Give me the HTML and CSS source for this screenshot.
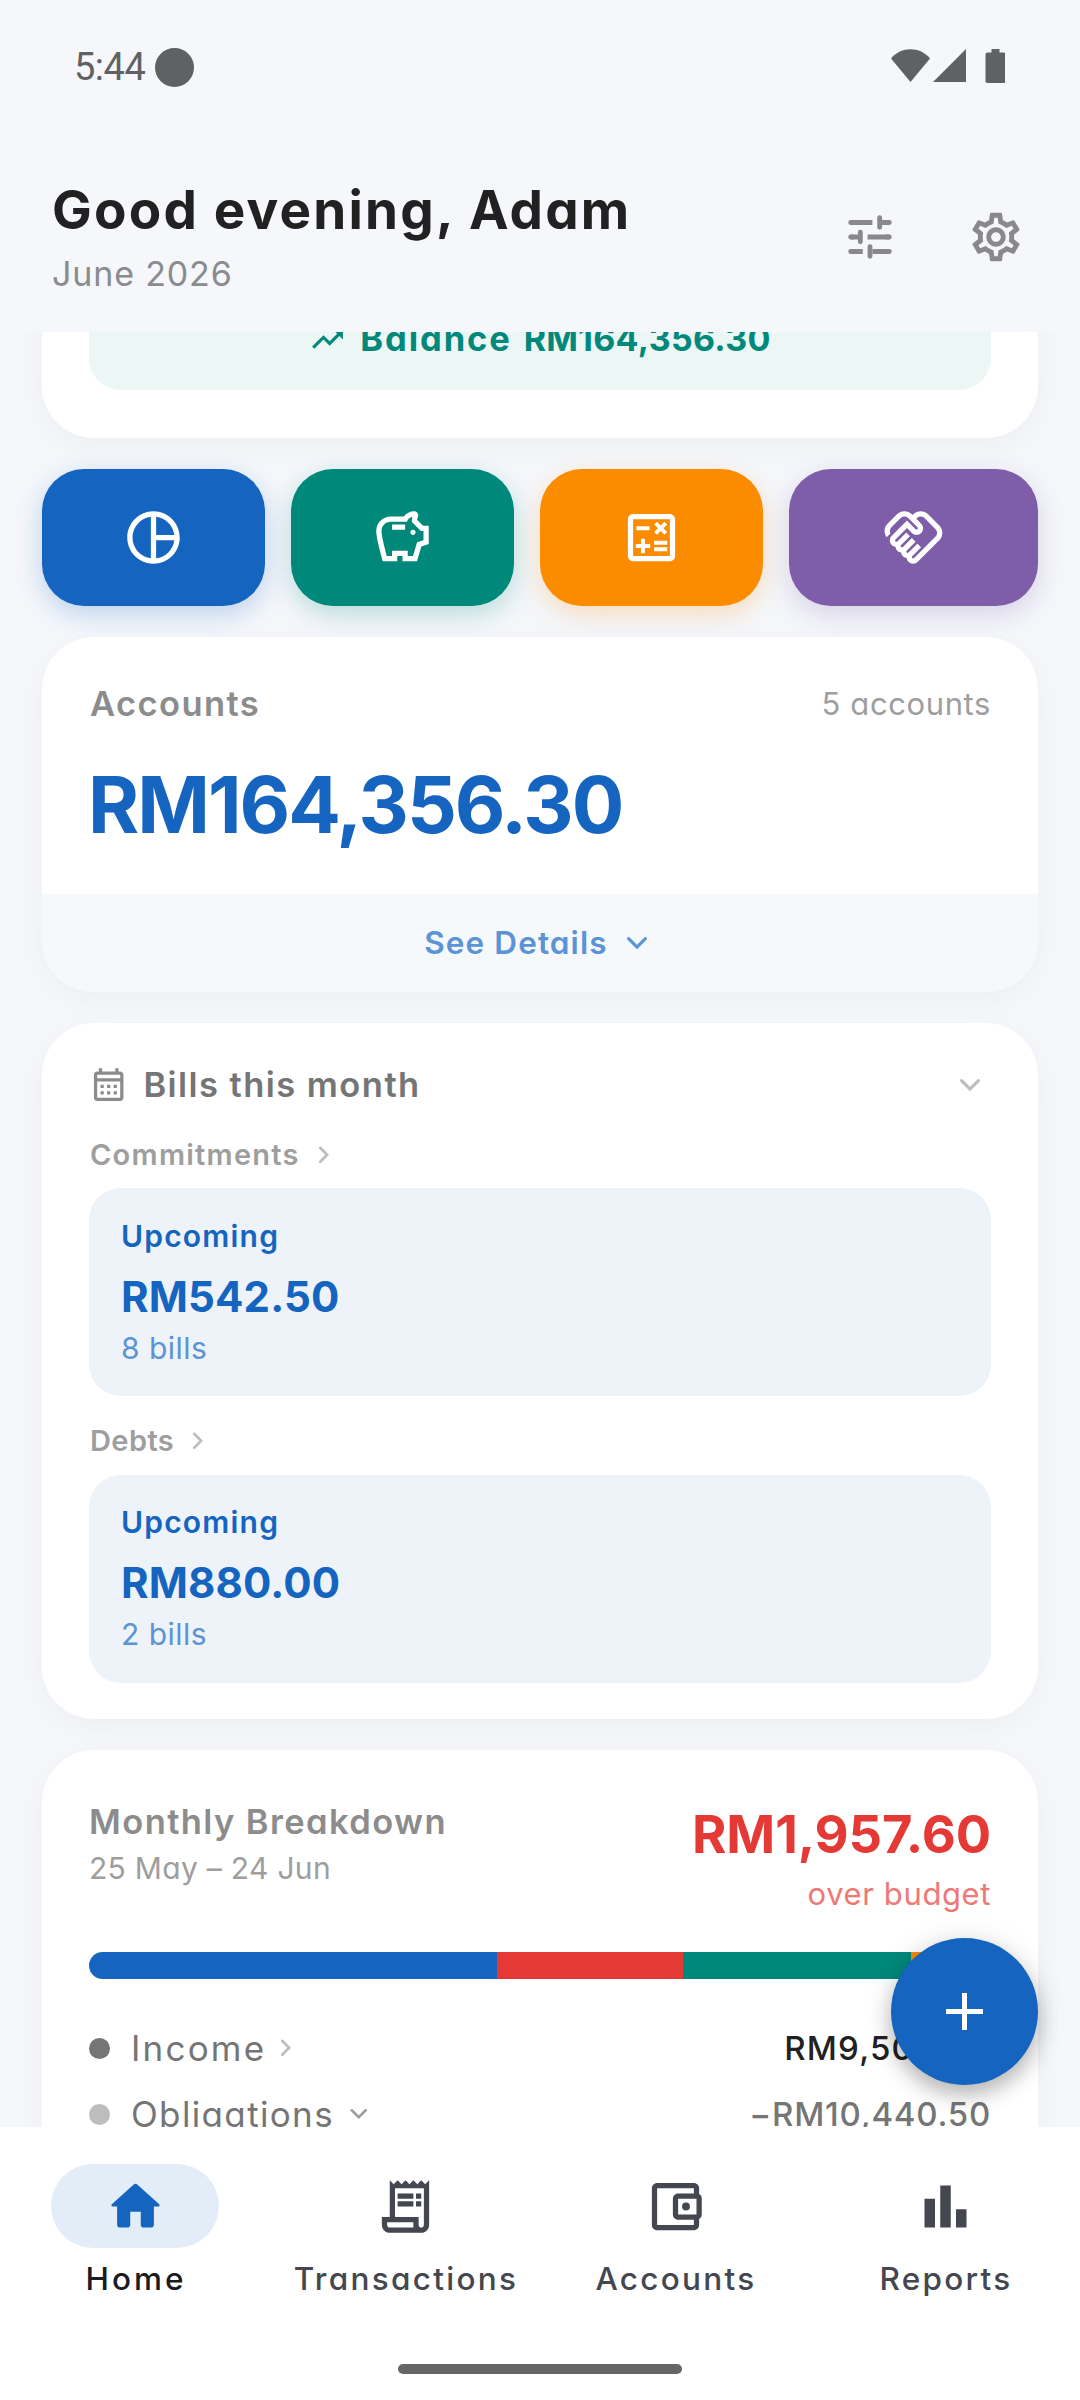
FILE: index.html
```html
<!DOCTYPE html>
<html lang="en">
<head>
<meta charset="utf-8">
<title>Home</title>
<link rel="stylesheet" href="styles.css">
</head>
<body>
<svg class="defs" aria-hidden="true">
  <symbol id="chev-down" viewBox="0 0 24 24"><path d="M6.7 9.3 12 14.6 17.3 9.3" fill="none" stroke="currentColor" stroke-width="2" stroke-linecap="round"/></symbol>
  <symbol id="chev-right" viewBox="0 0 24 24"><path d="M9.3 6.7 14.6 12 9.3 17.3" fill="none" stroke="currentColor" stroke-width="2" stroke-linecap="round"/></symbol>
</svg>
<div class="screen">
  <div class="status">
    <div class="clock"><span>5:44</span><i class="blob"></i></div>
    <svg class="signals" viewBox="0 0 114 35">
      <path d="M0 9.5C5 3.5 12 .3 19.500 .3S34 3.500 39 9.500L19.500 33z"/>
      <path d="M75 0v33H42z"/>
      <path d="M100.500 0h8v3.500h4a2 2 0 0 1 2 2V32a2 2 0 0 1-2 2H96.500a2 2 0 0 1-2-2V5.500a2 2 0 0 1 2-2h4z"/>
    </svg>
  </div>
  <header class="topbar">
    <div class="greeting">
      <h1>Good evening, Adam</h1>
      <p>June 2026</p>
    </div>
    <div class="actions">
      <svg viewBox="0 0 24 24" fill="none" stroke="currentColor" stroke-width="2">
        <path d="M4 6h9M17 6h3M4 12h4M11 12h9M4 18h5M13 18h7"/>
        <path stroke-linecap="round" d="M16 4v4M8 10v4M12 16v4M4 6h1M4 12h1M4 18h1M19 6h1M19 12h1M19 18h1"/>
      </svg>
      <svg viewBox="0 0 24 24" fill="currentColor"><path d="M19.430 12.980c.04-.32.07-.64.07-.98 0-.34-.03-.66-.07-.98l2.110-1.650c.19-.15.24-.42.12-.64l-2-3.460c-.09-.16-.26-.25-.44-.25-.06 0-.12.010-.17.030l-2.490 1c-.52-.4-1.080-.73-1.690-.98l-.38-2.650C14.460 2.180 14.250 2 14 2h-4c-.25 0-.46.180-.49.420l-.38 2.650c-.61.250-1.170.590-1.690.980l-2.490-1c-.06-.02-.12-.03-.18-.03-.17 0-.34.090-.43.250l-2 3.460c-.13.220-.07.490.120.640l2.110 1.650c-.04.320-.07.650-.07.980 0 .330.030.660.070.980l-2.110 1.650c-.19.150-.24.420-.12.640l2 3.460c.090.160.260.250.440.250.060 0 .120-.01.170-.03l2.490-1c.520.400 1.080.730 1.690.980l.380 2.650c.030.240.240.420.490.420h4c.250 0 .460-.18.490-.42l.380-2.650c.610-.25 1.170-.59 1.690-.98l2.490 1c.060.020.120.030.180.030.170 0 .340-.09.430-.25l2-3.460c.120-.22.070-.49-.12-.64l-2.110-1.650zm-1.980-1.710c.040.310.050.520.050.730 0 .210-.02.430-.05.730l-.14 1.130.890.700 1.080.840-.7 1.210-1.270-.51-1.040-.42-.9.680c-.43.320-.84.560-1.250.730l-1.060.430-.16 1.130-.2 1.350h-1.400l-.19-1.350-.16-1.130-1.060-.43c-.43-.18-.83-.41-1.230-.71l-.91-.7-1.060.430-1.270.510-.7-1.210 1.080-.84.890-.7-.14-1.130c-.03-.31-.05-.54-.05-.74s.020-.43.050-.73l.140-1.130-.89-.7-1.080-.84.700-1.210 1.270.510 1.040.420.900-.68c.430-.32.840-.56 1.250-.73l1.060-.43.160-1.130.200-1.350h1.390l.190 1.350.160 1.130 1.060.430c.430.180.830.410 1.230.710l.910.700 1.060-.43 1.270-.51.700 1.210-1.070.850-.89.700.140 1.130zM12 8c-2.210 0-4 1.790-4 4s1.790 4 4 4 4-1.790 4-4-1.790-4-4-4zm0 6c-1.100 0-2-.9-2-2s.900-2 2-2 2 .9 2 2-.9 2-2 2z"/></svg>
    </div>
  </header>

  <main class="feed">
    <div class="feed-content">
      <section class="card summary">
        <div class="balance">
          <svg viewBox="0 0 24 24" fill="currentColor"><path d="M16 6l2.290 2.290-4.880 4.880-4-4L2 16.590 3.410 18l6-6 4 4 6.300-6.290L22 12V6z"/></svg>
          <span class="balance-label">Balance</span><span class="balance-value">RM164,356.30</span>
        </div>
      </section>

      <nav class="shortcuts">
        <a class="tile blue"><svg viewBox="0 0 24 24" fill="currentColor"><path d="M12 2C6.480 2 2 6.480 2 12s4.480 10 10 10 10-4.480 10-10S17.520 2 12 2zm1 2.070c3.610.450 6.480 3.330 6.930 6.930H13V4.070zM4 12c0-4.060 3.070-7.440 7-7.930v15.870c-3.930-.5-7-3.880-7-7.940zm9 7.930V13h6.930c-.45 3.610-3.320 6.480-6.930 6.930z"/></svg></a>
        <a class="tile green"><svg viewBox="0 0 24 24" fill="currentColor"><path d="M15 10c0-.55.45-1 1-1s1 .45 1 1-.45 1-1 1-1-.45-1-1zM8 9h5V7H8v2zm14-1.500v6.970l-2.820.940L17.500 21H12v-2h-2v2H4.500S2 12.540 2 9.500C2 6.460 4.460 4 7.500 4h5c.91-1.210 2.360-2 4-2 .83 0 1.500.67 1.500 1.500 0 .21-.04.4-.12.58-.14.34-.26.73-.32 1.150l2.270 2.270H22zm-2 2h-1L15.500 6c0-.65.09-1.290.26-1.910-.97.25-1.760.97-2.090 1.910H7.500C5.570 6 4 7.570 4 9.500c0 1.880 1.220 6.650 2.010 9.500H8v-2h6v2h2.010l1.550-5.150 2.440-.82V9.500z"/></svg></a>
        <a class="tile orange"><svg viewBox="0 0 24 24" fill="currentColor"><path d="M19 3H5c-1.100 0-2 .9-2 2v14c0 1.100.9 2 2 2h14c1.100 0 2-.9 2-2V5c0-1.100-.9-2-2-2zm0 16H5V5h14v14z"/><path d="M6.250 7.720h5v1.500h-5zM13 15.750h5v1.500h-5zM13 13.250h5v1.500h-5zM8 18h1.500v-2h2v-1.500h-2v-2H8v2H6V16h2zM14.090 10.950l1.410-1.410 1.410 1.410 1.060-1.060-1.410-1.420 1.410-1.410L16.910 6 15.500 7.410 14.090 6l-1.060 1.060 1.410 1.410-1.410 1.420z"/></svg></a>
        <a class="tile purple"><svg viewBox="0 0 24 24" fill="currentColor"><path d="M12.220 19.850c-.18.18-.5.21-.71 0-.18-.18-.21-.5 0-.71l3.390-3.390-1.410-1.410-3.390 3.390c-.19.2-.51.19-.71 0-.21-.21-.18-.53 0-.71l3.390-3.390-1.410-1.410-3.390 3.390c-.18.18-.5.21-.71 0-.19-.19-.19-.51 0-.71l3.390-3.390-1.420-1.410-3.390 3.390c-.18.18-.5.21-.71 0-.19-.2-.19-.51 0-.71L9.520 8.400l1.870 1.860c.95.95 2.590.94 3.540 0 .98-.98.98-2.560 0-3.540l-1.860-1.860.28-.28c.78-.78 2.050-.78 2.830 0l4.240 4.240c.78.78.78 2.050 0 2.830l-8.200 8.200zm9.610-6.780c1.560-1.560 1.560-4.090 0-5.660l-4.240-4.240c-1.560-1.560-4.090-1.560-5.660 0l-.28.28-.28-.28c-1.560-1.560-4.090-1.560-5.660 0L2.170 6.710C.75 8.130.62 10.340 1.770 11.900l1.450-1.450c-.39-.75-.26-1.700.37-2.330l3.540-3.540c.78-.78 2.050-.78 2.830 0l3.560 3.560c.18.18.21.5 0 .71-.21.21-.53.18-.71 0L9.520 5.570l-5.800 5.790c-.98.97-.98 2.560 0 3.540.39.39.89.63 1.420.7.07.52.3 1.020.7 1.420.4.4.9.63 1.420.7.07.52.3 1.020.7 1.420.4.4.9.63 1.420.7.07.54.31 1.030.7 1.420.47.47 1.100.73 1.770.73s1.300-.26 1.770-.73l8.210-8.190z"/></svg></a>
      </nav>

      <section class="card accounts">
        <div class="accounts-body">
          <div class="row-between">
            <h2 class="section-title">Accounts</h2>
            <span class="muted">5 accounts</span>
          </div>
          <p class="total">RM164,356.30</p>
        </div>
        <div class="accounts-footer"><span>See Details</span><svg><use href="#chev-down"/></svg></div>
      </section>

      <section class="card bills">
        <div class="bills-head">
          <svg class="calendar" viewBox="0 0 24 24" fill="currentColor"><path d="M19 4h-1V2h-2v2H8V2H6v2H5c-1.110 0-1.990.9-1.990 2L3 20c0 1.100.89 2 2 2h14c1.100 0 2-.9 2-2V6c0-1.100-.9-2-2-2zm0 16H5V10h14v10zm0-12H5V6h14v2zM9 14H7v-2h2v2zm4 0h-2v-2h2v2zm4 0h-2v-2h2v2zm-8 4H7v-2h2v2zm4 0h-2v-2h2v2zm4 0h-2v-2h2v2z"/></svg>
          <h2>Bills this month</h2>
          <svg class="collapse"><use href="#chev-down"/></svg>
        </div>
        <div class="group"><span>Commitments</span><svg class="chev"><use href="#chev-right"/></svg></div>
        <div class="bill-box"><p class="state">Upcoming</p><p class="sum">RM542.50</p><p class="count">8 bills</p></div>
        <div class="group second"><span class="debts">Debts</span><svg class="chev"><use href="#chev-right"/></svg></div>
        <div class="bill-box"><p class="state">Upcoming</p><p class="sum">RM880.00</p><p class="count">2 bills</p></div>
      </section>

      <section class="card breakdown">
        <div class="row-between">
          <div>
            <h2 class="section-title">Monthly Breakdown</h2>
            <p class="period">25 May – 24 Jun</p>
          </div>
          <div class="over">
            <p class="over-amount">RM1,957.60</p>
            <p class="over-label">over budget</p>
          </div>
        </div>
        <div class="bar"><i class="blue" style="width:408px"></i><i class="red" style="width:186px"></i><i class="green" style="width:228px"></i><i class="orange"></i></div>
        <div class="line"><i class="dot dark"></i><span class="name income">Income</span><svg class="chev"><use href="#chev-right"/></svg><span class="value strong">RM9,500.00</span></div>
        <div class="line"><i class="dot"></i><span class="name">Obligations</span><svg class="chev down"><use href="#chev-down"/></svg><span class="value">−RM10,440.50</span></div>
      </section>
    </div>
  </main>

  <button class="fab" aria-label="Add"><svg viewBox="0 0 37 37"><path d="M18.500 0v37M0 18.500h37" stroke="#fff" stroke-width="5"/></svg></button>

  <nav class="tabs">
    <a class="tab active"><span class="pill"><svg viewBox="0 0 24 24" fill="currentColor"><path d="M10 19v-5h4v5c0 .55.45 1 1 1h3c.55 0 1-.45 1-1v-7h1.700c.46 0 .68-.57.33-.87L12.670 3.600c-.38-.34-.96-.34-1.340 0l-8.360 7.530c-.34.3-.13.87.33.87H5v7c0 .55.45 1 1 1h3c.55 0 1-.45 1-1z"/></svg></span><span class="home-label">Home</span></a>
    <a class="tab"><span class="pill"><svg viewBox="0 0 24 24" fill="currentColor"><path d="M19.500 3.500L18 2l-1.500 1.500L15 2l-1.500 1.500L12 2l-1.500 1.500L9 2 7.500 3.500 6 2v14H3v3c0 1.660 1.340 3 3 3h12c1.660 0 3-1.340 3-3V2l-1.500 1.500zM15 20H6c-.55 0-1-.45-1-1v-1h10v2zm4-1c0 .55-.45 1-1 1s-1-.45-1-1v-3H8V5h11v14z"/><path d="M9 7h6v2H9zM16 7h2v2h-2zM9 10h6v2H9zM16 10h2v2h-2z"/></svg></span><span>Transactions</span></a>
    <a class="tab"><span class="pill"><svg viewBox="0 0 24 24" fill="currentColor"><path d="M21 7.280V5c0-1.100-.9-2-2-2H5c-1.110 0-2 .9-2 2v14c0 1.100.89 2 2 2h14c1.100 0 2-.9 2-2v-2.280c.59-.35 1-.98 1-1.720V9c0-.74-.41-1.370-1-1.720zM20 9v6h-7V9h7zM5 19V5h14v2h-6c-1.100 0-2 .9-2 2v6c0 1.100.9 2 2 2h6v2H5z"/><circle cx="16" cy="12" r="1.500"/></svg></span><span>Accounts</span></a>
    <a class="tab"><span class="pill"><svg viewBox="0 0 24 24" fill="currentColor"><path d="M4 9h4v11H4zm12 4h4v7h-4zm-6-9h4v16h-4z"/></svg></span><span>Reports</span></a>
  </nav>
  <div class="gesture"><i></i></div>
</div>
</body>
</html>
```
FILE: styles.css
```css
* { box-sizing: border-box; }
body { margin: 0; background: #f5f7fb; font-family: Inter, "Open Sans", sans-serif; font-feature-settings: "cv11"; }
h1, h2, p { margin: 0; white-space: nowrap; }
i { display: block; }
svg { display: block; flex: none; }
.defs { width: 0; height: 0; position: absolute; }

.screen { position: relative; width: 1080px; height: 2400px; overflow: hidden; display: flex; flex-direction: column; }

/* System status bar */
.status { height: 134px; flex: none; padding: 48px 75px 0; display: flex; justify-content: space-between; color: #606163; }
.clock { display: flex; gap: 9px; height: 39px; align-items: center; font: 400 38px/39px Roboto, sans-serif; letter-spacing: -0.5px; }
.clock span { position: relative; left: -1px; }
.blob { width: 39px; height: 39px; border-radius: 50%; background: #606163; }
.signals { width: 114px; height: 35px; margin-top: 1px; fill: #606163; }

/* Greeting */
.topbar { height: 198px; flex: none; padding: 0 55px 0 52px; display: flex; justify-content: space-between; }
.greeting { padding-top: 46px; }
.greeting h1 { font-size: 53px; line-height: 60px; font-weight: 700; letter-spacing: 2.2px; color: #212121; }
.greeting p { margin-top: 14px; font-size: 34px; line-height: 40px; letter-spacing: 0.85px; color: #8a8b8d; }
.actions { display: flex; gap: 68px; padding-top: 74px; color: #89898b; }
.actions svg { width: 58px; height: 58px; }

/* Scrolled feed */
.feed { height: 1795px; flex: none; overflow: hidden; }
.feed-content { margin-top: -92px; padding: 0 42px; display: flex; flex-direction: column; gap: 31px; }
.card { background: #fff; border-radius: 52px; box-shadow: 0 8px 32px rgba(0, 0, 0, 0.04); }

.summary { padding: 48px 47px; }
.balance { height: 102px; border-radius: 32px; background: #ecf6f4; color: #00897b; display: flex; justify-content: center; align-items: center; font-size: 34.5px; line-height: 40px; font-weight: 700; }
.balance svg { width: 37px; height: 37px; margin-right: 14px; }
.balance-label { letter-spacing: 1.9px; margin-right: 12px; }
.balance-value { font-size: 34px; letter-spacing: 0.3px; }

.shortcuts { display: flex; gap: 26px; height: 137px; }
.tile { flex: 0 0 223px; border-radius: 42px; display: flex; align-items: center; justify-content: center; color: #fff; }
.tile:last-child { flex: 1; }
.tile svg { width: 63px; height: 63px; }
.tile.blue { background: #1565c0; box-shadow: 0 8px 26px rgba(21, 101, 192, 0.25); }
.tile.green { background: #00897b; box-shadow: 0 8px 26px rgba(0, 137, 123, 0.25); }
.tile.orange { background: #fb8c00; box-shadow: 0 8px 26px rgba(251, 140, 0, 0.25); }
.tile.purple { background: #7e5ea8; box-shadow: 0 8px 26px rgba(126, 94, 168, 0.25); }

.row-between { display: flex; justify-content: space-between; }
.section-title { font-size: 34.5px; font-weight: 600; letter-spacing: 1.4px; color: #8c8c8c; }
.muted { font-size: 31px; letter-spacing: 0.6px; color: #9e9e9e; }

.accounts { height: 355px; overflow: hidden; }
.accounts-body { height: 257px; padding: 42px 47px 0 48px; line-height: 50px; }
.total { margin: 26px 0 0 -2px; font-size: 78px; line-height: 100px; font-weight: 700; letter-spacing: -2px; color: #1565c0; }
.accounts-footer { height: 98px; background: #f5f9fc; color: #5b93d4; display: flex; align-items: center; justify-content: center; gap: 10px; font-size: 31.5px; line-height: 40px; font-weight: 600; letter-spacing: 1.1px; }
.accounts-footer svg { width: 38px; height: 38px; }

.bills { padding: 41px 47px 36.5px; }
.bills-head { height: 42px; display: flex; align-items: center; }
.bills-head h2 { flex: 1; margin-left: 15px; font-size: 34.5px; line-height: 42px; font-weight: 600; letter-spacing: 1.45px; color: #757575; }
.calendar { width: 39.4px; height: 39.4px; color: #8c8c8c; }
.collapse { width: 38px; height: 38px; margin-right: 2px; color: #bdbdbd; }
.group { height: 34px; margin: 31.5px 0 16.5px; display: flex; align-items: center; gap: 8px; padding-left: 1px; font-size: 29px; line-height: 34px; font-weight: 600; letter-spacing: 1.25px; color: #9e9e9e; }
.group.second { margin-top: 28px; }
.debts { letter-spacing: 0.4px; }
.chev { width: 31.5px; height: 31.5px; color: #bdbdbd; }
.bill-box { height: 208px; padding: 27.5px 32px 0; border-radius: 32px; background: #eef3fa; color: #1565c0; }
.state { font-size: 30px; line-height: 40px; font-weight: 600; letter-spacing: 1.2px; }
.sum { margin-top: 11px; font-size: 42px; line-height: 60px; font-weight: 700; letter-spacing: 0.15px; }
.count { margin-top: 1px; font-size: 30px; line-height: 40px; letter-spacing: 0.47px; color: #5b93d4; }

.breakdown { height: 460px; padding: 50px 47px 0; }
.breakdown .section-title { line-height: 44px; }
.period { margin-top: 6px; font-size: 30px; line-height: 36px; letter-spacing: 0.3px; color: #9e9e9e; }
.over { padding-top: 4px; text-align: right; }
.over-amount { font-size: 52.5px; line-height: 60px; font-weight: 700; letter-spacing: -0.1px; color: #e53935; }
.over-label { margin-top: 12px; font-size: 31px; line-height: 36px; letter-spacing: 0.6px; color: #ee7976; }
.bar { height: 27px; margin: 40px 0 36px; border-radius: 13.5px; overflow: hidden; display: flex; }
.bar .blue { background: #1565c0; }
.bar .red { background: #e53935; }
.bar .green { background: #00897b; }
.bar .orange { flex: 1; background: #fb8c00; }
.line { height: 66px; display: flex; align-items: center; font-size: 33px; color: #757575; }
.dot { width: 21px; height: 21px; margin-right: 21px; border-radius: 50%; background: #bdbdbd; }
.dot.dark { background: #757575; }
.name { font-size: 35px; letter-spacing: 1.35px; }
.name.income { letter-spacing: 2.2px; }
.line .chev { margin-left: 4px; }
.line .chev.down { margin-left: 9px; color: #9e9e9e; }
.value { margin-left: auto; font-weight: 450; letter-spacing: 0.75px; }
.value.strong { color: #212121; letter-spacing: 1.2px; }

/* Floating add button */
.fab { position: absolute; left: 891px; top: 1938px; width: 147px; height: 147px; padding: 0; border: 0; border-radius: 50%; background: #1565c0; display: flex; align-items: center; justify-content: center; box-shadow: 0 10px 20px rgba(0, 0, 0, 0.24), 0 3px 32px rgba(0, 0, 0, 0.1); }
.fab svg { width: 37px; height: 37px; }

/* Bottom navigation */
.tabs { height: 237px; flex: none; padding-top: 37px; background: #fff; display: flex; }
.tab { flex: 1; display: flex; flex-direction: column; align-items: center; gap: 11px; color: #44474f; font-size: 31.5px; line-height: 40px; font-weight: 450; letter-spacing: 2.3px; }
.tab > span:last-child { padding-left: 2px; }
.tab.active { color: #1a1b20; }
.home-label { letter-spacing: 3px; }
.pill { width: 168px; height: 84px; border-radius: 42px; display: flex; align-items: center; justify-content: center; }
.pill svg { width: 63px; height: 63px; }
.active .pill { background: #e3edf8; color: #1565c0; }
.gesture { flex: 1; background: #fff; display: flex; justify-content: center; }
.gesture i { width: 284px; height: 10px; border-radius: 5px; background: #666; }
```
